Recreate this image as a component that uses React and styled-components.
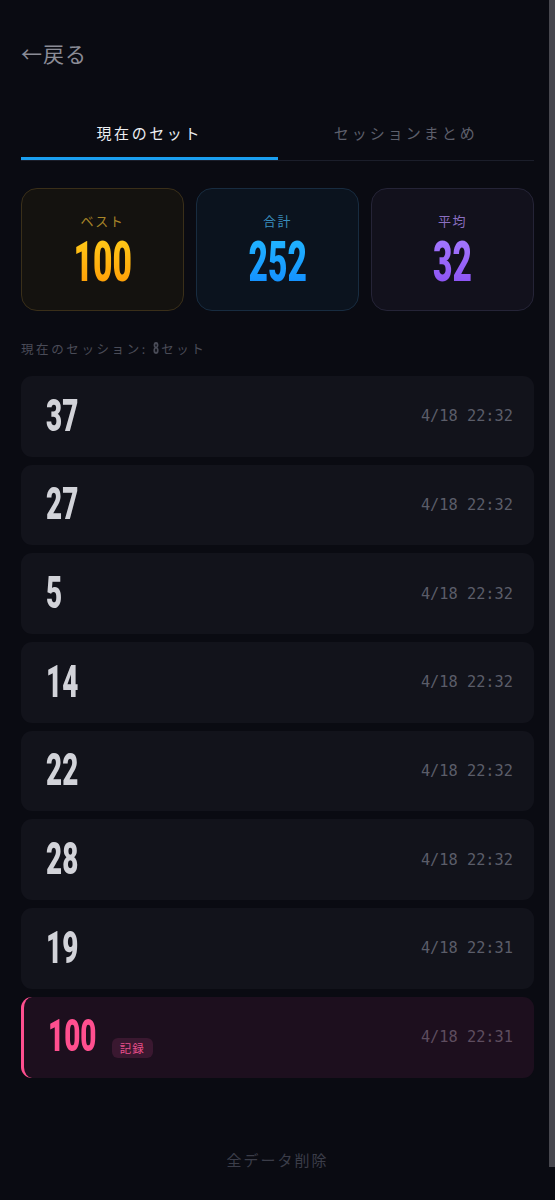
import React from "react";
import styled, { createGlobalStyle } from "styled-components";

const GlobalStyle = createGlobalStyle`
  html {
    background: #0a0b12;
  }
  body {
    margin: 0;
    background: #0a0b12;
    font-family: "Noto Sans CJK JP", "Noto Sans", sans-serif;
  }
`;

const Page = styled.div`
  padding: 39px 21px 60px 21px;
  min-height: 1234px;
  box-sizing: border-box;
`;

/* scroll indicator drawn over the right edge, as in the capture */
const ScrollThumb = styled.div`
  position: fixed;
  top: 0;
  right: 0;
  width: 6px;
  height: 1167px;
  background: #47474e;
`;

const BackButton = styled.div`
  font-size: 21px;
  line-height: 28px;
  color: #8b8c96;
  letter-spacing: 1px;
`;

const Tabs = styled.div`
  display: flex;
  margin-top: 43px;
  border-bottom: 1px solid #1b1e2a;
`;

const Tab = styled.div`
  flex: 1;
  text-align: center;
  font-size: 15px;
  line-height: 22px;
  letter-spacing: ${(p) => (p.$active ? "2.6px" : "3px")};
  padding: 12px 0 13px;
  color: ${(p) => (p.$active ? "#eceef3" : "#5d5f6b")};
  border-bottom: 3px solid ${(p) => (p.$active ? "#1a9ff0" : "transparent")};
`;

const StatGrid = styled.div`
  display: grid;
  grid-template-columns: repeat(3, 1fr);
  gap: 12px;
  margin-top: 27px;
`;

const StatCard = styled.div`
  height: 123px;
  box-sizing: border-box;
  border-radius: 16px;
  border: 1px solid ${(p) => p.$border};
  background: ${(p) => p.$bg};
  display: flex;
  flex-direction: column;
  align-items: center;
  padding-top: 23px;
`;

const StatLabel = styled.div`
  font-size: 13px;
  line-height: 18px;
  letter-spacing: 1.5px;
  color: ${(p) => p.$color};
`;

const StatValue = styled.span`
  display: inline-block;
  margin-top: 4px;
  font-family: Roboto, "Liberation Sans", sans-serif;
  font-weight: 900;
  font-size: 56px;
  line-height: 1;
  transform: scaleX(0.6);
  background: linear-gradient(180deg, ${(p) => p.$from}, ${(p) => p.$to});
  -webkit-background-clip: text;
  background-clip: text;
  color: transparent;
`;

const SessionLabel = styled.div`
  margin-top: 29px;
  font-size: 12.5px;
  line-height: 18px;
  letter-spacing: 2.6px;
  color: #4a4c58;
`;

const CountNum = styled.span`
  display: inline-block;
  font-family: Roboto, "Liberation Sans", sans-serif;
  font-weight: 900;
  font-size: 16px;
  transform: scaleX(0.65);
  margin: 0 -2px;
`;

const List = styled.div`
  display: flex;
  flex-direction: column;
  gap: 8px;
  margin-top: 18px;
`;

const Row = styled.div`
  height: 80.7px;
  box-sizing: border-box;
  display: flex;
  align-items: center;
  justify-content: space-between;
  padding: 0 21px 0 ${(p) => (p.$record ? "24px" : "25px")};
  border-radius: 11px;
  background: ${(p) => (p.$record ? "#1d0f1e" : "#12131b")};
  border-left: ${(p) => (p.$record ? "3px solid #ff4f8f" : "none")};
`;

const RowMain = styled.div`
  display: flex;
  align-items: center;
  gap: 15px;
`;

const RowValue = styled.span`
  display: inline-block;
  font-family: Roboto, "Liberation Sans", sans-serif;
  font-weight: 900;
  font-size: 43.5px;
  line-height: 1;
  transform: scaleX(0.64);
  transform-origin: left center;
  color: ${(p) => (p.$record ? "#ff4f8f" : "#d2d3d9")};
  margin-right: ${(p) => p.$shrink}px;
`;

const Badge = styled.span`
  margin-top: 22px;
  font-size: 11.5px;
  line-height: 14px;
  padding: 3px 8px;
  border-radius: 6px;
  letter-spacing: 1px;
  background: #3a1830;
  color: #e8508c;
`;

const Time = styled.span`
  font-family: "DejaVu Sans Mono", "Liberation Mono", monospace;
  font-size: 15.3px;
  color: ${(p) => (p.$record ? "#5e4d5f" : "#5b5d69")};
`;

const DeleteAll = styled.div`
  margin-top: 71px;
  text-align: center;
  font-size: 15px;
  line-height: 22px;
  letter-spacing: 2px;
  color: #3b3d49;
`;

const stats = [
  { label: "ベスト", value: 100, bg: "#14120f", border: "#3a2f19", labelColor: "#a98629", from: "#ffcd1a", to: "#ff9a05" },
  { label: "合計", value: 252, bg: "#0b131e", border: "#182c40", labelColor: "#3a8dbd", from: "#22b8ff", to: "#128bff" },
  { label: "平均", value: 32, bg: "#12111c", border: "#252437", labelColor: "#8b6fc2", from: "#a57bff", to: "#8a4ff2" },
];

const sets = [
  { value: 37, time: "4/18 22:32" },
  { value: 27, time: "4/18 22:32" },
  { value: 5, time: "4/18 22:32" },
  { value: 14, time: "4/18 22:32" },
  { value: 22, time: "4/18 22:32" },
  { value: 28, time: "4/18 22:32" },
  { value: 19, time: "4/18 22:31" },
  { value: 100, time: "4/18 22:31", record: true },
];

export default function App() {
  return (
    <>
      <GlobalStyle />
      <Page>
        <BackButton>←戻る</BackButton>
        <Tabs>
          <Tab $active>現在のセット</Tab>
          <Tab>セッションまとめ</Tab>
        </Tabs>
        <StatGrid>
          {stats.map((s) => (
            <StatCard key={s.label} $bg={s.bg} $border={s.border}>
              <StatLabel $color={s.labelColor}>{s.label}</StatLabel>
              <StatValue $from={s.from} $to={s.to}>{s.value}</StatValue>
            </StatCard>
          ))}
        </StatGrid>
        <SessionLabel>
          現在のセッション: <CountNum>8</CountNum>セット
        </SessionLabel>
        <List>
          {sets.map((s, i) => (
            <Row key={i} $record={s.record}>
              <RowMain>
                <RowValue $record={s.record} $shrink={-String(s.value).length * 9}>
                  {s.value}
                </RowValue>
                {s.record && <Badge>記録</Badge>}
              </RowMain>
              <Time $record={s.record}>{s.time}</Time>
            </Row>
          ))}
        </List>
        <DeleteAll>全データ削除</DeleteAll>
      </Page>
      <ScrollThumb />
    </>
  );
}
